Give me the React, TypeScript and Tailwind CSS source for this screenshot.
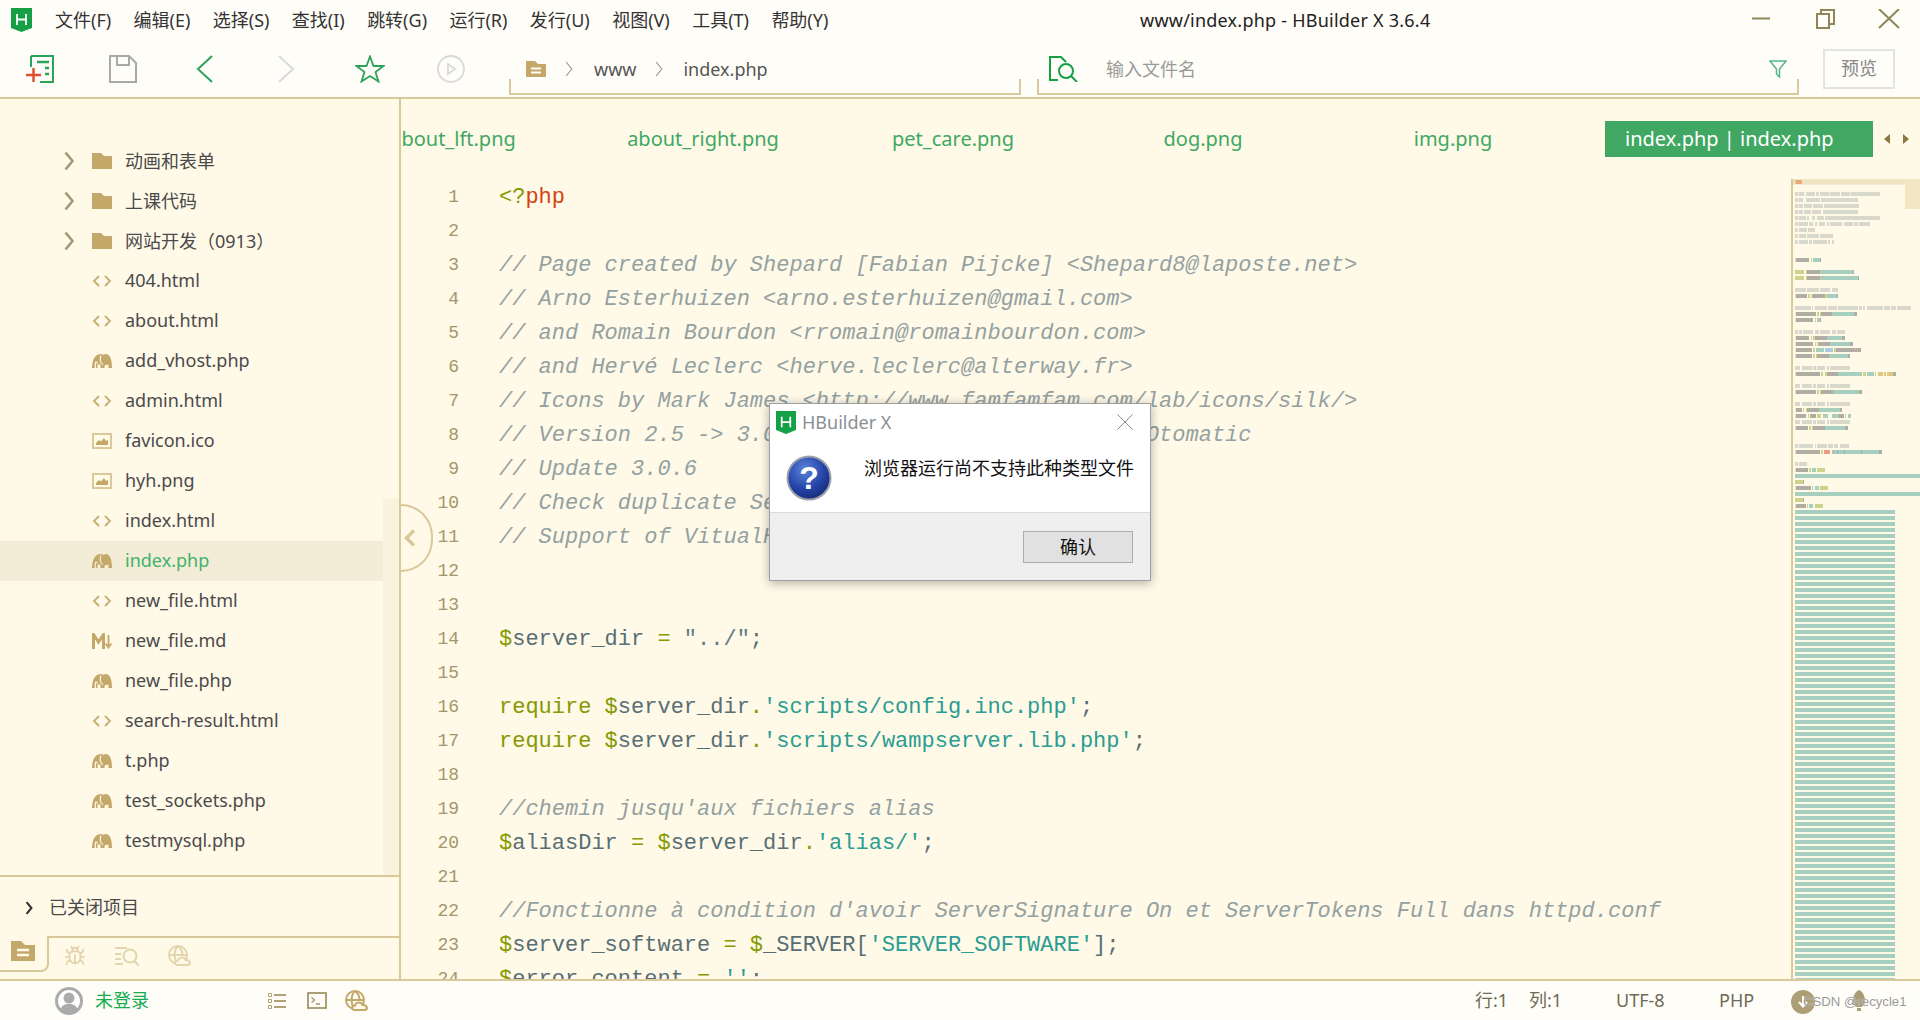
import React from 'react';
import { Bug } from 'lucide-react';

const Logo = ({ className }: { className: string }) => (
  <svg viewBox="0 0 21 24" className={className}>
    <path d="M0 0H21V20L10.5 24L0 20Z" fill="#15a045" />
    <path d="M6 6V17M15 6V17M6 11.5H15" stroke="#fff" strokeWidth="1.8" fill="none" />
  </svg>
);

const FolderIcon = () => (
  <svg viewBox="0 0 20 16" className="w-5 h-4">
    <path d="M0 0H9L12 3H20V16H0Z" fill="#c4a869" />
  </svg>
);

const CodeIcon = () => (
  <svg viewBox="0 0 20 12" className="w-5 h-3" fill="none" stroke="#c9b27a" strokeWidth="2">
    <path d="M7 1L2 6L7 11M13 1L18 6L13 11" />
  </svg>
);

const PhpIcon = ({ bg }: { bg: string }) => (
  <svg viewBox="0 0 20 16" className="w-5 h-4">
    <path d="M0 15C0 7 3 1 9 1C10 1 11 1.500 11.500 2C13 .5 15 .5 16.500 2C19 4 20 9 20 15H0Z" fill="#c4a869" />
    <path d="M9 2.500C7.500 6 8 10 11 11.500" stroke={bg} strokeWidth="1.200" fill="none" />
    <path d="M3.300 16V10.500C3.300 8.500 5.300 8.500 5.300 10.500" stroke={bg} strokeWidth="1.200" fill="none" />
    <path d="M5.500 11.500H8.500V16H5.500ZM12.500 12.500L16.500 11.500V16H12.500Z" fill={bg} />
  </svg>
);

const ImageIcon = () => (
  <svg viewBox="0 0 20 16" className="w-5 h-4">
    <rect x="1" y="1" width="18" height="14" fill="none" stroke="#dcc99a" strokeWidth="2" />
    <path d="M4 12V10L7 7L9 8.500L12 5L14 8L16 7V12Z" fill="#c4a869" />
  </svg>
);

const MdIcon = () => (
  <svg viewBox="0 0 20 16" className="w-5 h-4" fill="none" stroke="#c4a869">
    <path d="M1.500 16V1.500L6.500 9L11.500 1.500V16" strokeWidth="3" />
    <path d="M16.500 2V14M13.500 10.500L16.500 14.500L19.500 10.500" strokeWidth="1.800" />
  </svg>
);

const Chevron = ({ className, color, width = 2.6 }: { className: string; color: string; width?: number }) => (
  <svg viewBox="0 0 10 20" className={className} fill="none" stroke={color} strokeWidth={width}>
    <path d="M1.500 1.500L8.500 10L1.500 18.500" />
  </svg>
);

const WebCloud = ({ color, className }: { color: string; className: string }) => (
  <svg viewBox="0 0 24 21" className={className} fill="none" stroke={color} strokeWidth="2">
    <circle cx="10" cy="10" r="9" />
    <path d="M1 10H19M10 1C5.500 5 5.500 15 10 19M10 1C14 4 14.500 8 14.500 10" />
    <path d="M9 20C6.500 20 6.500 15.500 10 15.500C10.500 12 16.500 11.500 17.500 15C22 14.500 24 20 19.500 20Z" fill="#fff9e8" />
  </svg>
);

type Row = { name: string; icon: 'folder' | 'code' | 'php' | 'image' | 'md'; active?: boolean };

const rows: Row[] = [
  { name: '动画和表单', icon: 'folder' },
  { name: '上课代码', icon: 'folder' },
  { name: '网站开发（0913）', icon: 'folder' },
  { name: '404.html', icon: 'code' },
  { name: 'about.html', icon: 'code' },
  { name: 'add_vhost.php', icon: 'php' },
  { name: 'admin.html', icon: 'code' },
  { name: 'favicon.ico', icon: 'image' },
  { name: 'hyh.png', icon: 'image' },
  { name: 'index.html', icon: 'code' },
  { name: 'index.php', icon: 'php', active: true },
  { name: 'new_file.html', icon: 'code' },
  { name: 'new_file.md', icon: 'md' },
  { name: 'new_file.php', icon: 'php' },
  { name: 'search-result.html', icon: 'code' },
  { name: 't.php', icon: 'php' },
  { name: 'test_sockets.php', icon: 'php' },
  { name: 'testmysql.php', icon: 'php' },
];

const menus = ['文件(F)', '编辑(E)', '选择(S)', '查找(I)', '跳转(G)', '运行(R)', '发行(U)', '视图(V)', '工具(T)', '帮助(Y)'];

const Kw = ({ children }: { children: React.ReactNode }) => <span className="text-[#859900]">{children}</span>;
const Str = ({ children }: { children: React.ReactNode }) => <span className="text-[#2a9d92]">{children}</span>;
const Com = ({ children }: { children: React.ReactNode }) => <span className="italic text-[#93a1a1]">{children}</span>;

const codeLines: React.ReactNode[] = [
  <><Kw>&lt;?</Kw><span className="text-[#d6430f]">php</span></>,
  '',
  <Com>// Page created by Shepard [Fabian Pijcke] &lt;Shepard8@laposte.net&gt;</Com>,
  <Com>// Arno Esterhuizen &lt;arno.esterhuizen@gmail.com&gt;</Com>,
  <Com>// and Romain Bourdon &lt;rromain@romainbourdon.com&gt;</Com>,
  <Com>// and Hervé Leclerc &lt;herve.leclerc@alterway.fr&gt;</Com>,
  <Com>// Icons by Mark James &lt;http://www.famfamfam.com/lab/icons/silk/&gt;</Com>,
  <Com>// Version 2.5 -&gt; 3.0.6 by Dominique Ottello aka Otomatic</Com>,
  <Com>// Update 3.0.6</Com>,
  <Com>// Check duplicate ServerName</Com>,
  <Com>// Support of VitualHost</Com>,
  '',
  '',
  <><Kw>$</Kw>server_dir <Kw>=</Kw> <span className="text-[#657b83]">"../"</span>;</>,
  '',
  <><Kw>require $</Kw>server_dir<Kw>.</Kw><Str>'scripts/config.inc.php'</Str>;</>,
  <><Kw>require $</Kw>server_dir<Kw>.</Kw><Str>'scripts/wampserver.lib.php'</Str>;</>,
  '',
  <Com>//chemin jusqu'aux fichiers alias</Com>,
  <><Kw>$</Kw>aliasDir <Kw>=</Kw> <Kw>$</Kw>server_dir<Kw>.</Kw><Str>'alias/'</Str>;</>,
  '',
  <Com>//Fonctionne à condition d'avoir ServerSignature On et ServerTokens Full dans httpd.conf</Com>,
  <><Kw>$</Kw>server_software <Kw>=</Kw> <Kw>$</Kw>_SERVER[<Str>'SERVER_SOFTWARE'</Str>];</>,
  <><Kw>$</Kw>error_content <Kw>=</Kw> <Str>''</Str>;</>,
];

// minimap: [line, from, to, colour], x in tripled pixels
const C = '#d8d8cc';
const G = '#b0aea4';
const O = '#cdd38a';
const T = '#a6cfc0';
const Y = '#e0c880';
const commentRow = (line: number, spans: number[][]) => spans.map(([a, b]) => [line, a, b, C] as [number, number, number, string]);
const label: number[][] = [[45, 60], [66, 96], [99, 108], [111, 135], [141, 147], [150, 210]];
const miniBars: [number, number, number, string][] = [
  ...commentRow(3, [[45, 55], [57, 73], [78, 105], [108, 117], [120, 148], [150, 180], [183, 210], [212, 300]]),
  ...commentRow(4, [[45, 55], [57, 69], [78, 120], [123, 234]]),
  ...commentRow(5, [[45, 55], [57, 69], [72, 96], [99, 129], [132, 237]]),
  ...commentRow(6, [[45, 55], [57, 69], [72, 93], [96, 123], [129, 234]]),
  ...commentRow(7, [[45, 55], [57, 78], [81, 87], [96, 105], [111, 132], [135, 300]]),
  ...commentRow(8, [[45, 55], [57, 84], [87, 99], [105, 111], [117, 135], [141, 147], [150, 186], [192, 219], [222, 234], [237, 270]]),
  ...commentRow(9, [[45, 53], [57, 81], [84, 105]]),
  ...commentRow(10, [[45, 53], [57, 78], [81, 117], [120, 159]]),
  ...commentRow(11, [[45, 53], [57, 84], [87, 96], [99, 141], [144, 150], [156, 162]]),
  [14, 47, 87, G], [14, 93, 96, O], [14, 99, 120, T], [14, 120, 123, G],
  [16, 45, 72, O], [16, 78, 81, O], [16, 81, 120, G], [16, 120, 123, O], [16, 123, 219, T], [16, 219, 222, G],
  [17, 45, 72, O], [17, 78, 81, O], [17, 81, 120, G], [17, 120, 123, O], [17, 123, 234, T], [17, 234, 237, G],
  ...commentRow(19, [[45, 78], [81, 117], [120, 150], [156, 174]]),
  [20, 47, 81, G], [20, 84, 90, O], [20, 95, 135, G], [20, 135, 141, O], [20, 141, 171, T], [20, 171, 174, G],
  ...commentRow(22, [[45, 93], [96, 99], [105, 141], [144, 171], [174, 234], [237, 246], [249, 255], [261, 309], [312, 330], [333, 348], [351, 393]]),
  [23, 47, 108, G], [23, 111, 117, O], [23, 120, 123, O], [23, 123, 156, G], [23, 156, 222, T], [23, 222, 231, G],
  [24, 47, 99, G], [24, 105, 108, O], [24, 111, 120, T], [24, 120, 123, G],
  ...commentRow(26, [[45, 54], [57, 66], [69, 99], [105, 117], [120, 150], [156, 168], [171, 195]]),
  [27, 47, 87, G], [27, 93, 96, O], [27, 99, 105, O], [27, 105, 141, G], [27, 141, 186, T], [27, 186, 195, G],
  [28, 47, 99, G], [28, 105, 108, O], [28, 111, 117, O], [28, 117, 150, G], [28, 150, 210, T], [28, 210, 219, G],
  [29, 47, 96, G], [29, 99, 105, O], [29, 108, 132, T], [29, 135, 159, '#a9cbe0'], [29, 162, 168, O], [29, 168, 222, G], [29, 222, 225, '#e8a9b0'], [29, 225, 231, G], [29, 231, 234, '#e8a9b0'], [29, 234, 243, G],
  [30, 47, 96, G], [30, 99, 105, O], [30, 108, 111, O], [30, 111, 147, G], [30, 147, 204, T], [30, 204, 210, G],
  ...commentRow(32, label),
  [33, 47, 120, G], [33, 123, 129, O], [33, 135, 141, O], [33, 141, 174, G], [33, 174, 246, T], [33, 249, 258, O], [33, 261, 282, T], [33, 285, 288, O], [33, 294, 309, Y], [33, 312, 318, Y], [33, 321, 339, Y], [33, 339, 348, G],
  ...commentRow(35, label),
  [36, 47, 108, G], [36, 111, 117, O], [36, 120, 123, O], [36, 123, 159, G], [36, 159, 237, T], [36, 237, 246, G],
  ...commentRow(38, label),
  [39, 47, 66, G], [39, 69, 72, O], [39, 78, 81, O], [39, 81, 117, G], [39, 117, 180, T], [39, 180, 186, G],
  [40, 47, 78, G], [40, 84, 87, O], [40, 90, 108, G], [40, 111, 123, O], [40, 129, 144, T], [40, 156, 171, T], [40, 171, 174, O], [40, 174, 192, G], [40, 195, 198, O], [40, 204, 213, T],
  ...commentRow(41, label),
  [42, 47, 84, G], [42, 87, 93, O], [42, 96, 99, O], [42, 99, 135, G], [42, 135, 195, T], [42, 195, 204, G],
  ...commentRow(45, [[45, 54], [57, 99], [105, 108], [111, 141], [144, 159], [162, 174], [180, 207]]),
  [46, 47, 120, G], [46, 123, 129, O], [46, 132, 150, '#ef9a85'], [46, 156, 159, T], [46, 159, 162, G], [46, 162, 171, T], [46, 171, 174, G], [46, 174, 192, T], [46, 192, 195, G], [46, 195, 243, T], [46, 243, 246, G], [46, 246, 297, T], [46, 297, 306, G],
  ...commentRow(48, [[45, 54], [57, 81]]),
  [49, 47, 84, G], [49, 87, 93, O], [49, 96, 108, T], [49, 111, 135, O],
  [50, 45, 420, T],
  [51, 45, 69, O], [51, 69, 72, G],
  [52, 47, 93, G], [52, 96, 99, O], [52, 105, 117, T], [52, 120, 144, O],
  [53, 45, 420, T],
  [54, 45, 69, O], [54, 69, 72, G],
  [55, 47, 78, G], [55, 81, 84, O], [55, 87, 99, T], [55, 105, 129, O],
];
for (let line = 56; line <= 134; line++) miniBars.push([line, 45, 345, T]);

const Minimap = () => (
  <svg viewBox="39 27 381 2403" className="w-[127px] h-[801px] block">
    <rect x="39" y="27" width="381" height="17" fill="#efe3c4" />
    <rect x="375" y="27" width="45" height="90" fill="#f3e6c5" />
    <rect x="45" y="30" width="3" height="12" fill={O} />
    <rect x="48" y="30" width="18" height="12" fill="#eca77c" />
    {miniBars.map(([line, a, b, fill], i) => (
      <rect key={i} x={a} y={27 + (line - 1) * 18 + 3} width={b - a} height="12" fill={fill} />
    ))}
  </svg>
);

const RowIcon = ({ icon, active }: { icon: Row['icon']; active?: boolean }) => {
  if (icon === 'folder') return <FolderIcon />;
  if (icon === 'code') return <CodeIcon />;
  if (icon === 'php') return <PhpIcon bg={active ? '#f3ecd6' : '#fff9e8'} />;
  if (icon === 'image') return <ImageIcon />;
  return <MdIcon />;
};

const Sidebar = () => (
  <div className="w-[401px] shrink-0 flex flex-col border-r-2 border-[#d9c89a]">
    <div className="relative h-[776px] pt-[42px] overflow-hidden">
      {rows.map(row => (
        <div key={row.name} className={`flex items-center h-10 w-[383px] ${row.active ? 'bg-[#f3ecd6]' : ''}`}>
          <div className="w-[92px] pl-[64px] shrink-0">
            {row.icon === 'folder' && <Chevron className="w-[10px] h-[20px]" color="#a39878" />}
          </div>
          <div className="w-[33px] shrink-0 flex items-center">
            <RowIcon icon={row.icon} active={row.active} />
          </div>
          <span className={`text-[18px] ${row.icon === 'folder' ? '' : 'pb-[2px]'} ${row.active ? 'text-[#3eb36b]' : 'text-[#4a4a4a]'}`}>{row.name}</span>
        </div>
      ))}
      <div className="absolute left-[383px] top-[400px] bottom-0 w-4 bg-[#f8f2de]" />
    </div>
    <div className="border-t-2 border-[#d9c89a] h-[61px] flex items-center pl-[25px] gap-[16px] pt-[2px]">
      <Chevron className="w-2 h-[14px]" color="#333" width={3} />
      <span className="text-[18px] text-[#4a4a4a]">已关闭项目</span>
    </div>
    <div className="flex-1 flex">
      <div className="w-[49px] h-[36px] border-r-2 border-b-2 border-[#d9c89a] rounded-br-lg flex items-start pl-[11px] pt-[5px]">
        <svg viewBox="0 0 24 20" className="w-6 h-5">
          <path d="M0 0H10L14 4H24V20H0Z" fill="#c4a869" />
          <path d="M6 9H18M6 14H18" stroke="#fff9e8" strokeWidth="2.500" />
        </svg>
      </div>
      <div className="flex-1 border-t-2 border-[#d9c89a] flex items-center pl-[15px] pb-[4px] h-[41px] gap-[29px]">
        <Bug className="w-[22px] h-[22px] text-[#e3d5ad]" strokeWidth={2} />
        <svg viewBox="0 0 24 20" className="w-6 h-5" fill="none" stroke="#e3d5ad" strokeWidth="2">
          <path d="M0 2H12M0 8H6M0 13H6M0 18H8" />
          <circle cx="15" cy="10" r="6.500" />
          <path d="M19.500 15L24 20" />
        </svg>
        <WebCloud color="#e3d5ad" className="w-6 h-[21px]" />
      </div>
    </div>
  </div>
);

const TopBar = () => (
  <div className="border-b-2 border-[#d9c89a] bg-[#fffdf8]">
    <div className="h-10 flex items-center relative">
      <Logo className="w-[21px] h-6 ml-[11px] mr-[23px]" />
      <div className="flex gap-[22.4px] text-[18px] text-[#333]">
        {menus.map(m => (
          <span key={m}>{m}</span>
        ))}
      </div>
      <span className="absolute left-[1140px] text-[18px] tracking-[0.23px] text-[#222]">www/index.php - HBuilder X 3.6.4</span>
      <svg viewBox="0 0 168 20" className="absolute left-[1752px] top-[9px] w-[168px] h-5" fill="none" stroke="#8f8559" strokeWidth="2">
        <path d="M0 9.500H18" />
        <path d="M65 5H77V19H65ZM69 5V1H82V15H77" />
        <path d="M127 0L147 19M147 0L127 19" />
      </svg>
    </div>
    <div className="h-[57px] flex items-center">
      <div className="ml-[26px] flex items-center">
        <svg viewBox="0 0 28 28" className="w-7 h-7 mr-[55px]" fill="none">
          <path d="M5 1H27V27H14M5 1V12" stroke="#2ba35a" strokeWidth="2" />
          <path d="M11 7H23M19 13H23M19 19H23" stroke="#2ba35a" strokeWidth="2.500" />
          <path d="M0 20H15M7.500 13V27" stroke="#e2502e" strokeWidth="2.500" />
        </svg>
        <svg viewBox="0 0 28 28" className="w-7 h-7 mr-[59px]" fill="none" stroke="#a9a9a9" strokeWidth="2">
          <path d="M1 1H20L27 8V27H1Z" />
          <path d="M8 1V10H20V1" />
        </svg>
        <svg viewBox="0 0 18 28" className="w-[18px] h-7 mr-[63px]" fill="none" stroke="#2ba35a" strokeWidth="2">
          <path d="M16 1L2 14L16 27" />
        </svg>
        <svg viewBox="0 0 18 28" className="w-[18px] h-7 mr-[60px]" fill="none" stroke="#d9d9d9" strokeWidth="2">
          <path d="M2 1L16 14L2 27" />
        </svg>
        <svg viewBox="0 0 30 28" className="w-[30px] h-7 mr-[52px]" fill="none" stroke="#2ba35a" strokeWidth="1.800">
          <path d="M15 1.500L18.500 11H28.500L20.500 17L23.500 26.500L15 21L6.500 26.500L9.500 17L1.500 11H11.500Z" />
        </svg>
        <svg viewBox="0 0 28 28" className="w-7 h-7" fill="none" stroke="#d9d9d9" strokeWidth="1.800">
          <circle cx="14" cy="14" r="13" />
          <path d="M11 9L18 14L11 19Z" />
        </svg>
      </div>
      <div className="ml-[44px] w-[512px] h-4 self-end mb-[2px] border-x-2 border-b-2 border-[#d9c89a] relative">
        <div className="absolute left-[15px] top-[-28px] h-[36px] flex items-center text-[18px] text-[#555]">
          <svg viewBox="0 0 20 16" className="w-5 h-4 mr-[18px]">
            <path d="M0 0H9L12 3H20V16H0Z" fill="#c4a869" />
            <path d="M5 7.500H15M5 11.500H15" stroke="#fffdf8" strokeWidth="2" />
          </svg>
          <Chevron className="w-[10px] h-4 mr-[20px]" color="#999" width={1.400} />
          <span className="mr-[18px]">www</span>
          <Chevron className="w-[10px] h-4 mr-[19px]" color="#999" width={1.400} />
          <span>index.php</span>
        </div>
      </div>
      <div className="ml-[16px] w-[762px] h-4 self-end mb-[2px] border-x-2 border-b-2 border-[#d9c89a] relative">
        <div className="absolute left-[10px] top-[-28px] h-[36px] w-[740px] flex items-center">
          <svg viewBox="0 0 30 26" className="w-[30px] h-[26px] mr-[27px]" fill="none" stroke="#15a045" strokeWidth="2">
            <path d="M9 24H1V1H12L17 6" />
            <circle cx="17" cy="15" r="7" />
            <path d="M22 20L28 26" />
          </svg>
          <span className="text-[18px] text-[#9a9a9a]">输入文件名</span>
          <svg viewBox="0 0 18 18" className="w-[18px] h-[18px] ml-auto mr-[2px]" fill="none">
            <path d="M1 1H17L10.500 9V17L7.500 14V9Z" stroke="#54b58c" strokeWidth="1.500" />
          </svg>
        </div>
      </div>
      <div className="ml-[24px] w-[72px] h-10 border-2 border-[#e3e3e3] flex items-center justify-center text-[18px] text-[#888]">预览</div>
    </div>
  </div>
);

const tabs = ['about_lft.png', 'about_right.png', 'pet_care.png', 'dog.png', 'img.png'];

const TabBar = () => (
  <div className="h-[80px] shrink-0 flex items-start pt-[22px]">
    <div className="w-[1204px] shrink-0 h-9 overflow-hidden flex justify-end">
      {tabs.map(t => (
        <div key={t} className="w-[250px] shrink-0 flex items-center justify-center text-[20px] text-[#41a863]">
          {t}
        </div>
      ))}
      <div className="w-[27px] shrink-0" />
    </div>
    <div className="w-[268px] h-9 shrink-0 bg-[#41a863] text-white text-[20px] flex items-center pl-5">index.php | index.php</div>
    <div className="flex items-center h-9 pl-[11px] gap-[13px]">
      <svg viewBox="0 0 6 10" className="w-[6px] h-[10px]"><path d="M6 0V10L0 5Z" fill="#8a7a3d" /></svg>
      <svg viewBox="0 0 6 10" className="w-[6px] h-[10px]"><path d="M0 0V10L6 5Z" fill="#8a7a3d" /></svg>
    </div>
  </div>
);

const Editor = () => (
  <div className="flex-1 flex flex-col min-w-0">
    <TabBar />
    <div className="flex-1 flex min-h-0 overflow-hidden">
      <div className="w-[1390px] shrink-0 flex font-['Liberation_Mono','DejaVu_Sans_Mono',monospace] leading-[34px]">
        <div className="w-[58px] shrink-0 pt-[1px] text-right text-[18px] text-[#a3966c]">
          {codeLines.map((_, i) => (
            <div key={i} className="h-[34px]">{i + 1}</div>
          ))}
        </div>
        <div className="pl-[40px] pt-[2px] text-[22px] text-[#586e75] whitespace-pre">
          {codeLines.map((line, i) => (
            <div key={i} className="h-[34px]">{line}</div>
          ))}
        </div>
      </div>
      <div className="border-l-2 border-[#d9c89a] w-[129px] shrink-0">
        <Minimap />
      </div>
    </div>
  </div>
);

const StatusBar = () => (
  <div className="h-[41px] border-t-2 border-[#d9c89a] bg-[#fffdf8] flex items-center relative text-[18px]">
    <svg viewBox="0 0 28 28" className="w-7 h-7 ml-[55px] mr-[12px]">
      <circle cx="14" cy="14" r="12.500" fill="#fff" stroke="#ababab" strokeWidth="3" />
      <circle cx="14" cy="11" r="5.500" fill="#ababab" />
      <path d="M5 24C6 18 10 17 14 17C18 17 22 18 23 24C20 27 8 27 5 24Z" fill="#ababab" />
    </svg>
    <span className="text-[#12ad4d]">未登录</span>
    <svg viewBox="0 0 18 16" className="w-[18px] h-4 ml-[119px]" fill="none" stroke="#b0a377" strokeWidth="2">
      <path d="M6 2H18M6 8H18M6 14H18" />
      <path d="M0.500 0.500H3.500V3.500H0.500ZM0.500 6.500H3.500V9.500H0.500ZM0.500 12.500H3.500V15.500H0.500Z" strokeWidth="1" />
    </svg>
    <svg viewBox="0 0 20 17" className="w-5 h-[17px] ml-[21px]" fill="none" stroke="#a39569">
      <rect x="1" y="1" width="18" height="15" strokeWidth="1.800" />
      <path d="M4.500 5.500L7.500 8L4.500 10.500M9 12H13" strokeWidth="1.300" />
    </svg>
    <WebCloud color="#c4a869" className="w-6 h-[21px] ml-[18px]" />
    <div className="absolute left-[1475px] text-[#6f6a55]">行:1</div>
    <div className="absolute left-[1529px] text-[#6f6a55]">列:1</div>
    <div className="absolute left-[1616px] text-[#6f6a55]">UTF-8</div>
    <div className="absolute left-[1719px] text-[#6f6a55]">PHP</div>
    <svg viewBox="0 0 24 24" className="absolute left-[1791px] top-[9px] w-6 h-6">
      <circle cx="12" cy="12" r="12" fill="#ad9f75" />
      <path d="M12 6V16M8 12L12 16.500L16 12" stroke="#fff" strokeWidth="2" fill="none" />
    </svg>
    <svg viewBox="0 0 14 22" className="absolute left-[1852px] top-[9px] w-[14px] h-[22px]">
      <path d="M7 0C11 2 13 6 13 11C13 15 11 17 7 17C3 17 1 15 1 11C1 6 3 2 7 0ZM5 18H9V21H5Z" fill="#a99c73" />
    </svg>
    <span className="absolute left-[1803px] top-[13px] font-['Liberation_Sans',sans-serif] text-[13.2px] leading-4 text-[#9a9a9a] [text-shadow:0_0_1px_#fff]">CSDN @recycle1</span>
  </div>
);

const Dialog = () => (
  <div className="absolute left-[769px] top-[403px] w-[382px] h-[178px] border border-[#a0a0a0] shadow-[0_2px_10px_rgba(0,0,0,0.3)] flex flex-col bg-white">
    <div className="h-[108px] relative">
      <div className="flex items-center h-[32px] mt-[2px] pl-[6px]">
        <Logo className="w-[20px] h-[23px] mr-[6px]" />
        <span className="text-[18px] text-[#8a8f94]">HBuilder X</span>
      </div>
      <svg viewBox="0 0 16 16" className="absolute right-[17px] top-[10px] w-4 h-4" fill="none" stroke="#8a8a8a" strokeWidth="1">
        <path d="M0.500 0.500L15.500 15.500M15.500 0.500L0.500 15.500" />
      </svg>
      <svg viewBox="0 0 46 46" className="absolute left-[16px] top-[51px] w-[46px] h-[46px]">
        <defs>
          <radialGradient id="qb" cx="40%" cy="30%" r="75%">
            <stop offset="0%" stopColor="#5c84dc" />
            <stop offset="60%" stopColor="#2444a8" />
            <stop offset="100%" stopColor="#152a72" />
          </radialGradient>
        </defs>
        <circle cx="23" cy="23" r="21.500" fill="url(#qb)" stroke="#9aa0aa" strokeWidth="2" />
        <text x="23" y="34" textAnchor="middle" fontSize="32" fontWeight="700" fill="#fff" fontFamily="Liberation Sans">?</text>
      </svg>
      <span className="absolute left-[94px] top-[52px] text-[18px] leading-6 text-[#111] whitespace-nowrap">浏览器运行尚不支持此种类型文件</span>
    </div>
    <div className="flex-1 bg-[#efefef] border-t border-[#dcdcdc] flex items-start justify-end pr-[17px] pt-[18px]">
      <div className="w-[110px] h-8 bg-[#e1e1e1] border border-[#adadad] flex items-center justify-center text-[18px] text-[#111]">确认</div>
    </div>
  </div>
);

const App: React.FC = () => (
  <div className="relative w-[1920px] h-[1020px] overflow-hidden flex flex-col bg-[#fff9e8] font-['Noto_Sans','Noto_Sans_CJK_SC',sans-serif]">
    <TopBar />
    <div className="flex-1 flex min-h-0">
      <Sidebar />
      <Editor />
    </div>
    <StatusBar />
    <div className="absolute left-[401px] top-[504px] w-[32px] h-[68px] border-2 border-l-0 border-[#d9c89a] rounded-r-[34px] bg-[#fff9e8] flex items-center pl-[3px]">
      <svg viewBox="0 0 12 18" className="w-3 h-[18px]" fill="none" stroke="#d9c89a" strokeWidth="3.500">
        <path d="M10 1.500L2.500 9L10 16.500" />
      </svg>
    </div>
    <Dialog />
  </div>
);

export default App;
